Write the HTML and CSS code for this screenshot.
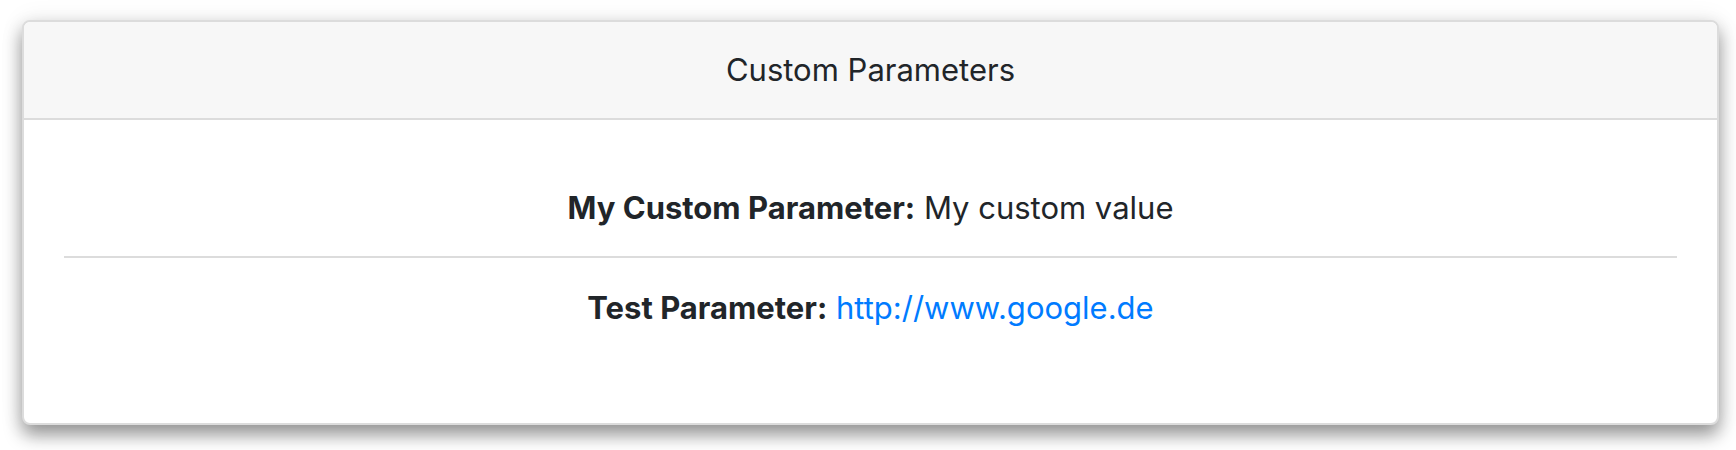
FILE: index.html
```html
<!DOCTYPE html>
<html>
<head>
<meta charset="utf-8">
<link rel="stylesheet" href="styles.css">
</head>
<body>
<div class="card">
  <div class="card-header">Custom Parameters</div>
  <div class="card-body">
    <div class="param"><strong>My Custom Parameter:</strong> My custom value</div>
    <div class="param"><strong>Test Parameter:</strong> <a href="#">http://www.google.de</a></div>
  </div>
</div>
</body>
</html>
```
FILE: styles.css
```css
html, body {
  margin: 0;
  background: #ffffff;
}
body {
  padding: 20px 17px 26px 22px;
  font-family: Inter, "Noto Sans", sans-serif;
  color: #212529;
}
.card {
  border: 2px solid #dcdcdc;
  border-radius: 8px;
  background: #fff;
  box-shadow: 0 10px 18px rgba(0, 0, 0, 0.4), 0 0 24px rgba(0, 0, 0, 0.08);
  overflow: hidden;
}
.card-header {
  background: #f7f7f7;
  border-bottom: 2px solid #dcdcdc;
  text-align: center;
  font-size: 31px;
  line-height: 48px;
  padding: 24px 40px;
}
.card-body {
  padding: 38px 40px 67px;
}
.param {
  text-align: center;
  font-size: 31px;
  line-height: 48px;
  padding: 26px 0 24px;
}
.param + .param {
  border-top: 2px solid #dcdcdc;
}
.param strong {
  font-weight: 700;
}
.param a {
  color: #007bff;
  text-decoration: none;
}
```
